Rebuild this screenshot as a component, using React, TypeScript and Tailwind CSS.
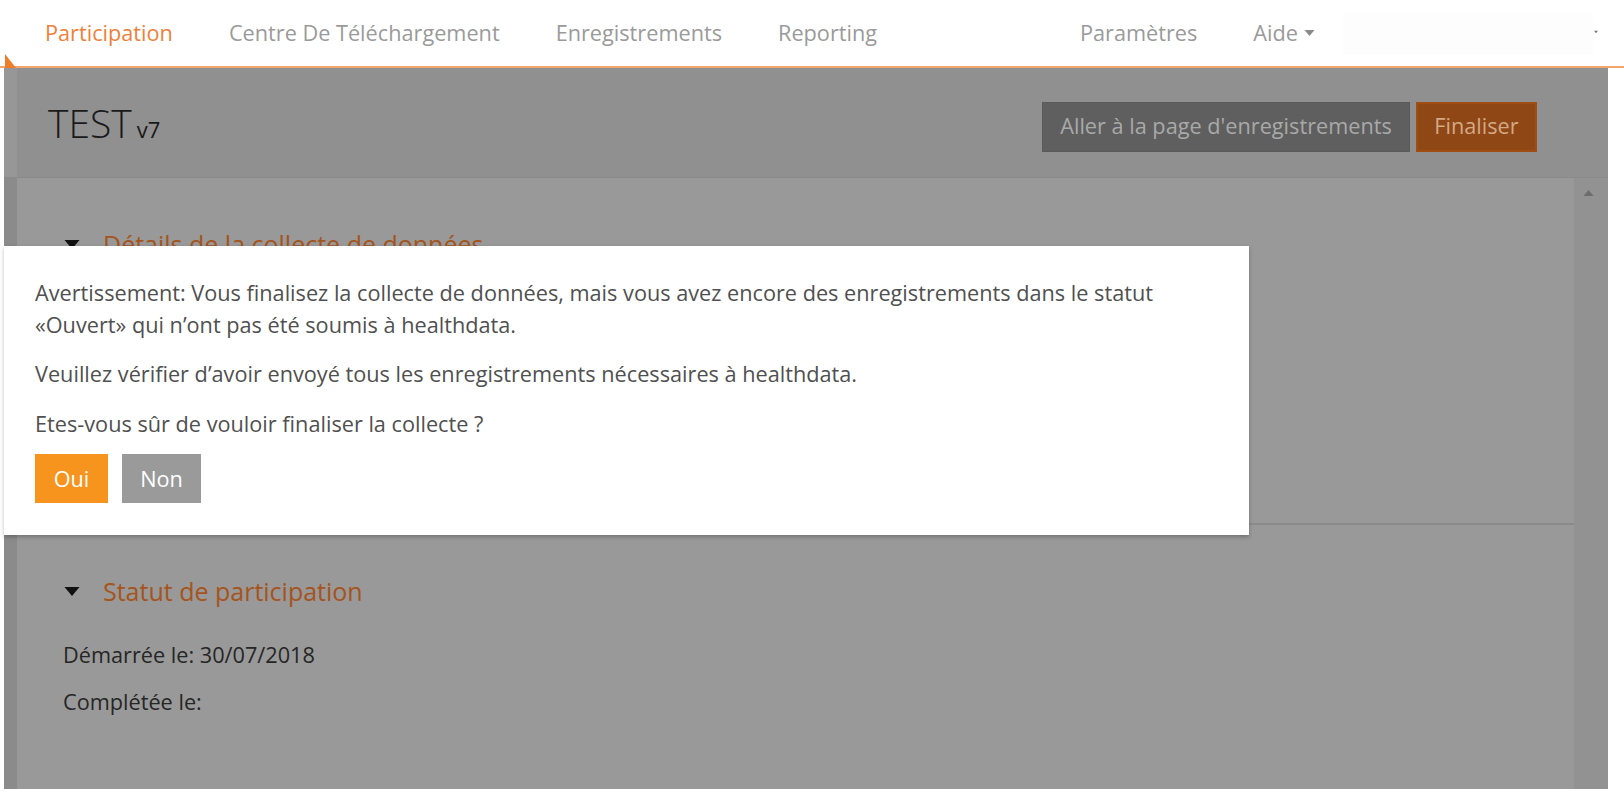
import { useState } from 'react'

const navLinks = ['Participation', 'Centre De Téléchargement', 'Enregistrements', 'Reporting']

function Caret({ className }: { className?: string }) {
  return (
    <svg viewBox="0 0 10 6" className={className} fill="currentColor">
      <path d="M0 0h10L5 6z" />
    </svg>
  )
}

function SectionTitle({ title }: { title: string }) {
  return (
    <div className="flex items-center">
      <Caret className="h-[9px] w-[18px] text-[#111]" />
      <h2 className="ml-[22px] text-[25px] leading-[32px] text-[#a4541c]">{title}</h2>
    </div>
  )
}

export default function App() {
  const [actif] = useState('Participation')

  return (
    <div className="relative h-[799px] w-[1624px] overflow-hidden bg-white font-['Open_Sans',sans-serif]">
      {/* barre de navigation */}
      <nav className="relative flex h-[68px] items-center border-b-2 border-[#f3a56b] pr-[26px]">
        <ul className="flex items-center pl-[17px]">
          {navLinks.map((lien) => (
            <li
              key={lien}
              className={`px-[28px] text-[21.7px] ${lien === actif ? 'text-[#ef7f3c]' : 'text-[#9a9a9a]'}`}
            >
              {lien}
            </li>
          ))}
        </ul>
        <div className="ml-auto flex items-center">
          <span className="px-[28px] text-[21.7px] text-[#9a9a9a]">Paramètres</span>
          <span className="flex items-center gap-[6px] pl-[28px] pr-[28px] text-[21.7px] text-[#9a9a9a]">
            Aide
            <Caret className="h-[6px] w-[11px] text-[#8a8a8a]" />
          </span>
          <div className="h-[43px] w-[250px] bg-[#fdfdfd]" />
          <Caret className="-mt-[2px] ml-[1px] h-[4px] w-[4px] text-[#777]" />
        </div>
        <div className="absolute bottom-[-2px] left-[5px] h-[14px] w-[11px] bg-[#ef7d2a] [clip-path:polygon(0_0,100%_100%,0_100%)]" />
      </nav>

      {/* page (sous le fond du modal) */}
      <div className="ml-[4px] flex h-[721px] w-[1604px] flex-col">
        <header className="flex h-[110px] border-b border-[#8a8a8a] bg-[#909090]">
          <div className="w-[13px] bg-[#979797]" />
          <div className="flex flex-1 items-center justify-between pl-[31px] pr-[71px]">
            <h1 className="flex items-baseline gap-[5px] text-[#1a1a1a]">
              <span className="text-[39px] font-light leading-none">TEST</span>
              <span className="text-[22px] leading-none">v7</span>
            </h1>
            <div className="mt-[8px] flex gap-[6px]">
              <button className="h-[50px] w-[368px] border border-[#5a5a5a] bg-[#5f5f5f] text-[21.7px] text-[#a9a9a9]">
                Aller à la page d'enregistrements
              </button>
              <button className="h-[50px] w-[121px] border-2 border-[#a04d13] bg-[#8f4716] text-[21.7px] text-[#d3a986]">
                Finaliser
              </button>
            </div>
          </div>
        </header>

        <div className="flex flex-1">
          <div className="w-[13px] bg-[#8b8b8b]" />
          <main className="flex-1 bg-[#999999]">
            <section className="h-[347px] border-b-2 border-[#8a8a8a] pl-[46px] pt-[50px]">
              <SectionTitle title="Détails de la collecte de données" />
            </section>
            <section className="pl-[46px] pt-[50px] text-[21.7px] text-[#262626]">
              <SectionTitle title="Statut de participation" />
              <p className="mt-[32px] leading-[32px]">Démarrée le: 30/07/2018</p>
              <p className="mt-[15px] leading-[32px]">Complétée le:</p>
            </section>
          </main>
          <div className="w-[34px] bg-[#929292] pl-[9px] pt-[12px]">
            <Caret className="h-[6px] w-[11px] rotate-180 text-[#6d6d6d]" />
          </div>
        </div>
      </div>

      {/* modal de confirmation */}
      <div className="absolute left-[4px] top-[246px] h-[289px] w-[1245px] bg-white pl-[31px] shadow-[0_2px_4px_rgba(0,0,0,0.25)]">
        <div className="pt-[31px] text-[21.7px] leading-[32px] text-[#505050]">
          <p>
            Avertissement: Vous finalisez la collecte de données, mais vous avez encore des enregistrements dans le
            statut
            <br />
            «Ouvert» qui n’ont pas été soumis à healthdata.
          </p>
          <p className="mt-[17px]">Veuillez vérifier d’avoir envoyé tous les enregistrements nécessaires à healthdata.</p>
          <p className="mt-[18px]">Etes-vous sûr de vouloir finaliser la collecte ?</p>
          <div className="mt-[14px] flex gap-[14px]">
            <button className="h-[49px] w-[73px] bg-[#f7941e] text-[21.7px] text-white">Oui</button>
            <button className="h-[49px] w-[79px] bg-[#9a9a9a] text-[21.7px] text-white">Non</button>
          </div>
        </div>
      </div>
    </div>
  )
}
